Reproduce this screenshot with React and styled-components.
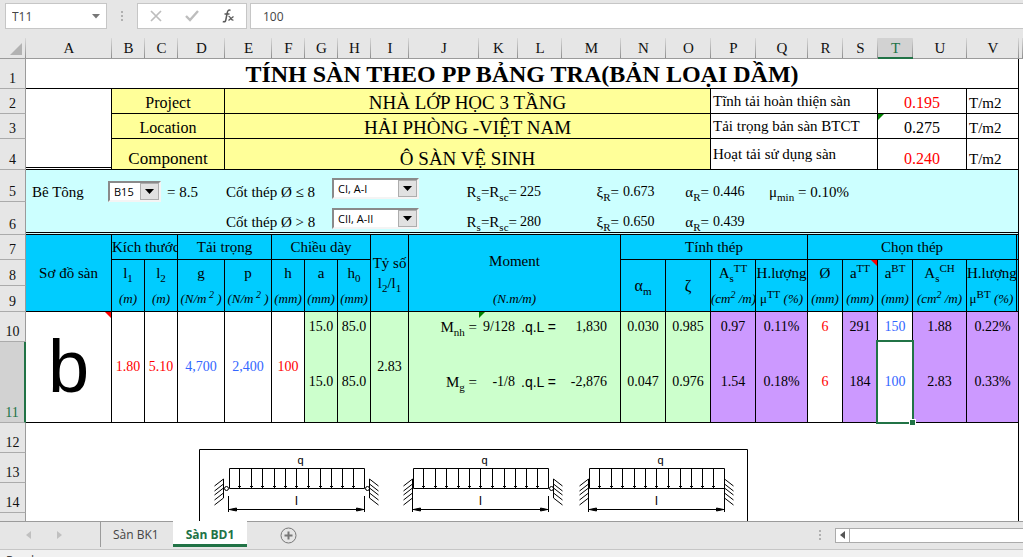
import React from "react";
import styled, { createGlobalStyle, css } from "styled-components";

const SERIF = '"Liberation Serif", "Times New Roman", serif';
const UI = '"Open Sans", "Noto Sans", sans-serif';

const color = {
  chrome: "#e6e6e6",
  line: "#9b9b9b",
  green: "#217346",
  yellow: "#ffff99",
  pale: "#ccffff",
  head: "#00ccff",
  mint: "#ccffcc",
  violet: "#cc99ff",
  white: "#ffffff",
  red: "#ff0000",
  blue: "#3366ff",
};

const GlobalStyle = createGlobalStyle`
  *, *::before, *::after { box-sizing: border-box; }
  body { margin: 0; background: #f1f1f1; }
  button, input, select { font: inherit; color: inherit; margin: 0; }
`;

const Page = styled.div`
  display: flex;
  flex-direction: column;
  height: 100vh;
  overflow: hidden;
  font-family: ${UI};
  font-size: 12px;
  color: #444;
`;

/* ---------- formula bar ---------- */

const FormulaBar = styled.header`
  display: flex;
  flex: none;
  align-items: center;
  height: 38px;
  padding: 3px 0 9px 5px;
  background: ${color.chrome};
`;

const NameBox = styled.div`
  display: flex;
  align-items: center;
  width: 102px;
  height: 26px;
  padding-right: 6px;
  border: 1px solid #c6c6c6;
  background: #fff;
`;

const BarInput = styled.input`
  flex: 1;
  min-width: 0;
  height: 24px;
  padding: 0 6px;
  border: 0;
  background: transparent;
  outline: 0;
`;

const Dots = styled.span`
  width: 2px;
  height: 10px;
  margin: 0 14px;
  background: repeating-linear-gradient(#b0b0b0 0 2px, transparent 2px 4px);
`;

const BarButtons = styled.div`
  display: flex;
  align-items: center;
  justify-content: space-around;
  width: 110px;
  height: 26px;
  margin-right: 3px;
  border: 1px solid #c6c6c6;
  background: #fff;
`;

const IconButton = styled.button`
  display: flex;
  align-items: center;
  justify-content: center;
  padding: 0;
  border: 0;
  background: transparent;
`;

const FormulaField = styled.div`
  display: flex;
  flex: 1;
  height: 26px;
  padding-left: 6px;
  border: 1px solid #c6c6c6;
  border-right: 0;
  background: #fff;
`;

/* ---------- sheet ---------- */

const SheetArea = styled.main`
  flex: none;
  overflow: hidden;
  background: #fff;
`;

const Sheet = styled.table`
  width: 100%;
  table-layout: fixed;
  border-collapse: separate;
  border-spacing: 0;
  font-family: ${SERIF};
  font-size: 15px;
  line-height: 20px;
  color: #000;
  white-space: nowrap;

  sub, sup { font-size: 11px; line-height: 0; }
`;

const Row = styled.tr`
  height: ${(p) => p.$h}px;
`;

const ColumnHead = styled.th`
  padding: 0;
  line-height: 18px;
  font-weight: 400;
  background: linear-gradient(#d8d8d8, #8f8f8f) right / 1px 100% no-repeat
    ${(p) => (p.$on ? "#d2d2d2" : color.chrome)};
  color: ${(p) => (p.$on ? color.green : "#111")};
  border-bottom: ${(p) => (p.$on ? `2px solid ${color.green}` : `1px solid ${color.line}`)};
`;

const Corner = styled(ColumnHead)`
  vertical-align: bottom;
  svg { display: block; margin: 0 0 3px 10px; }
`;

const RowHead = styled.th`
  padding: 0 0 1px;
  font-size: 14px;
  line-height: 16px;
  font-weight: 400;
  vertical-align: bottom;
  color: ${(p) => (p.$on ? color.green : "#111")};
  background: ${(p) => (p.$on ? "#d2d2d2" : color.chrome)};
  border-bottom: 1px solid #ababab;
  border-right: ${(p) => (p.$on ? `2px solid ${color.green}` : `1px solid ${color.line}`)};
`;

const LastRowHead = styled(RowHead)`
  padding: 0;
  border-bottom: 0;
`;

const edge = { none: "0", thin: "1px solid #000", double: "3px double #000" };

const Cell = styled.td`
  position: relative;
  padding: 0 ${(p) => p.$pr || 0}px 0 ${(p) => p.$pl || 0}px;
  text-align: ${(p) => p.$align || "center"};
  vertical-align: ${(p) => p.$v || "middle"};
  background: ${(p) => color[p.$bg || "white"]};
  color: ${(p) => (p.$ink ? color[p.$ink] : "#000")};
  border-right: ${(p) => edge[p.$right || "thin"]};
  border-bottom: ${(p) => edge[p.$bottom || "thin"]};
  ${(p) => p.$size && css`font-size: ${p.$size}px;`}
  ${(p) => p.$active && css`z-index: 1;`}
`;

const TitleCell = styled(Cell)`
  font-size: 24px;
  line-height: 28px;
  font-weight: 700;
`;

const HeadCell = styled(Cell).attrs({ $bg: "head" })``;

const UnitCell = styled(HeadCell)`
  font-size: 13px;
  font-style: italic;
  sup { font-size: 10px; }
`;

const NumCell = styled(Cell)`
  font-size: 14px;
`;

const SansCell = styled(NumCell)`
  font-family: "Liberation Sans", Arial, sans-serif;
`;

const DiagramLetter = styled(Cell)`
  font-family: "Liberation Sans", Arial, sans-serif;
  font-size: 74px;
  line-height: 80px;
`;

const Filler = styled.td`
  padding: 0;
`;

const Upright = styled.span`
  font-style: normal;
  sup { font-size: 11px; }
`;

const Flag = styled.span`
  position: absolute;
  top: 0;
  ${(p) => (p.$side === "left" ? "left: 0;" : "right: 0;")}
  width: 6px;
  height: 6px;
  background: ${(p) => (p.$side === "left" ? "#008000" : "#ff0000")};
  clip-path: ${(p) =>
    p.$side === "left" ? "polygon(0 0, 100% 0, 0 100%)" : "polygon(0 0, 100% 0, 100% 100%)"};
`;

const Selection = styled.span`
  position: absolute;
  inset: -2px;
  border: 2px solid ${color.green};

  &::after {
    content: "";
    position: absolute;
    right: -4px;
    bottom: -4px;
    width: 7px;
    height: 7px;
    border: 1px solid #fff;
    background: ${color.green};
  }
`;

/* ---------- material rows ---------- */

const Inline = styled.div`
  display: flex;
  align-items: flex-end;
  justify-content: ${(p) => (p.$spread ? "space-between" : "flex-start")};
`;

const FieldLabel = styled.label`
  width: ${(p) => p.$w}px;
`;

const Push = styled.span`
  margin-left: auto;
`;

const Value = styled.span`
  font-size: 14px;
`;

const Combo = styled.span`
  position: relative;
  display: flex;
  width: ${(p) => p.$w}px;
  height: 21px;
  margin: 0 6px ${(p) => (p.$raised ? 3 : 0)}px 0;
  border: 2px solid;
  border-color: #8a8a8a #f4f4f4 #f4f4f4 #8a8a8a;
  background: #fff;

  select {
    flex: 1;
    min-width: 0;
    padding: 0 0 0 4px;
    border: 0;
    outline: 0;
    appearance: none;
    background: transparent;
    font-family: ${UI};
    font-size: 11px;
    line-height: 16px;
    color: #000;
  }

  svg {
    flex: none;
    border: 1px solid #adadad;
    background: #e1e1e1;
    pointer-events: none;
  }
`;

/* ---------- drawing ---------- */

const DrawingCell = styled(Cell)`
  padding: 26px 0 0 173px;

  svg { display: block; }
`;

/* ---------- footer ---------- */

const TabBar = styled.nav`
  display: flex;
  flex: none;
  height: 29px;
  border-top: 1px solid ${color.line};
  border-bottom: 1px solid #c6c6c6;
  background: ${color.chrome};
`;

const TabArrows = styled.div`
  display: flex;
  align-items: center;
  justify-content: space-between;
  width: 62px;
  height: 26px;
  padding-left: 26px;
  margin-right: 38px;
`;

const Tab = styled.button`
  height: 26px;
  margin-top: -1px;
  border: 0;
  background: transparent;
  ${(p) =>
    p.$on
      ? css`
          background: #fff;
          color: ${color.green};
          font-weight: 700;
          border-bottom: 3px solid ${color.green};
          padding: 3px 13px 0;
        `
      : css`
          padding: 0 14px 0 12px;
          border-left: 1px solid #9b9b9b;
        `}
`;

const AddSheet = styled(IconButton)`
  width: 18px;
  height: 26px;
  margin-left: 32px;
`;

const ScrollGroup = styled.div`
  display: flex;
  align-items: center;
  width: 218px;
  height: 26px;
  margin-left: auto;
`;

const ScrollButton = styled(IconButton)`
  width: 15px;
  height: 15px;
  border: 1px solid #ababab;
  background: #fff;
`;

const ScrollTrack = styled.div`
  flex: 1;
  height: 15px;
  border: 1px solid #ababab;
  border-width: 1px 0;
  background: #fff;
`;

const StatusBar = styled.footer`
  flex: 1;
  padding: 2px 6px;
  background: #f1f1f1;
`;

/* ---------- data ---------- */

const columns = [
  ["A", 86], ["B", 33], ["C", 33], ["D", 47], ["E", 47], ["F", 33], ["G", 33], ["H", 33],
  ["I", 38], ["J", 70], ["K", 39], ["L", 44], ["M", 59], ["N", 45], ["O", 45], ["P", 45],
  ["Q", 52], ["R", 35], ["S", 35], ["T", 35], ["U", 54], ["V", 52],
];

const project = [
  { n: 2, h: 25, label: "Project", value: "NHÀ LỚP HỌC 3 TẦNG", load: "Tĩnh tải hoàn thiện sàn", amount: "0.195", ink: "red", size: 16 },
  { n: 3, h: 25, label: "Location", value: "HẢI PHÒNG -VIỆT NAM", load: "Tải trọng bản sàn BTCT", amount: "0.275", flag: true, size: 16 },
  { n: 4, h: 31, label: "Component", value: "Ô SÀN VỆ SINH", load: "Hoạt tải sử dụng sàn", amount: "0.240", ink: "red", size: 17 },
];

const results = [
  {
    n: 10, h: 30, sub: "nh", ratio: "9/128", m: "1,830", alpha: "0.030", zeta: "0.985", as: "0.97",
    mu: "0.11%", dia: "6", att: "291", abt: "150", ach: "1.88", mubt: "0.22%",
  },
  {
    n: 11, h: 81, sub: "g", ratio: "-1/8", m: "-2,876", alpha: "0.047", zeta: "0.976", as: "1.54",
    mu: "0.18%", dia: "6", att: "184", abt: "100", ach: "2.83", mubt: "0.33%",
  },
];

const beams = [
  { x: 30, left: "pin", right: "pin" },
  { x: 214, left: "fixed", right: "pin" },
  { x: 390, left: "fixed", right: "fixed" },
];

const arrowOffsets = [10, 22, 33, 45, 56, 67, 79, 91, 102, 113, 124];

/* ---------- parts ---------- */

function ComboBox({ id, width, raised, options }) {
  return (
    <Combo $w={width} $raised={raised}>
      <select id={id} defaultValue={options[0]}>
        {options.map((o) => (
          <option key={o}>{o}</option>
        ))}
      </select>
      <svg width="19" height="17" viewBox="0 0 17 15" aria-hidden="true">
        <path d="M4 5h9L8.500 10z" fill="#000" />
      </svg>
    </Combo>
  );
}

function Wall({ x, dir }) {
  const hatch = [0, 5, 9, 14, 19].map((y) => `M${x} ${30 + y}l${dir * 9} 7`).join("");
  return <path d={`M${x} 30v19${hatch}`} />;
}

function Beam({ x, left, right }) {
  const L = x + 0.5;
  const R = L + 135;
  return (
    <g fill="none" stroke="#000" strokeWidth="1">
      <path d={`M${L} 39.500V19.500H${R}V39.500Z`} />
      {arrowOffsets.map((o) => (
        <path key={o} d={`M${L + o} 20V39M${L + o - 1.5} 37.500h3`} />
      ))}
      {left === "pin" && <circle cx={L - 3} cy="39.500" r="2" />}
      {right === "pin" && <circle cx={R + 3} cy="39.500" r="2" />}
      <Wall x={left === "pin" ? L - 6 : L - 1} dir={-1} />
      <Wall x={right === "pin" ? R + 5 : R} dir={1} />
      <path d={`M${L - 1} 47V63M${R} 47V63M${L - 1} 60.500H${R}`} />
      <path d={`M${L} 60.500l7-1.500v3zM${R - 1} 60.500l-7-1.500v3z`} fill="#000" />
      <g fill="#000" stroke="none" fontFamily="Liberation Sans, Arial, sans-serif">
        <text x={L + 71} y="15" fontSize="11" textAnchor="middle">q</text>
        <text x={L + 67} y="56" fontSize="13" textAnchor="middle">l</text>
      </g>
    </g>
  );
}

function SlabSchemes() {
  return (
    <svg width="549" height="72" viewBox="0 0 549 72" role="img" aria-label="Sơ đồ sàn">
      <path d="M.5 72V.5H548.500V72" fill="none" stroke="#000" />
      {beams.map((b) => (
        <Beam key={b.x} {...b} />
      ))}
    </svg>
  );
}

function MaterialRow({ n, h, bottom, first, sign, steel, rs, xi, alpha, mu }) {
  const base = { $bg: "pale", $v: "bottom", $right: "none", $bottom: bottom, $align: "left" };
  return (
    <Row $h={h}>
      <RowHead>{n}</RowHead>
      <Cell {...base} colSpan={4} $pl={6}>
        {first && (
          <Inline>
            <FieldLabel $w={76} htmlFor="concrete">Bê Tông</FieldLabel>
            <ComboBox id="concrete" width={53} options={["B15", "B20", "B25"]} />
            <span>= 8.5</span>
          </Inline>
        )}
      </Cell>
      <Cell {...base} colSpan={7} $pl={1} $pr={1}>
        <Inline>
          <FieldLabel $w={106} htmlFor={`steel-${n}`}>Cốt thép Ø {sign} 8</FieldLabel>
          <ComboBox id={`steel-${n}`} width={87} raised options={steel} />
          <Push>R<sub>s</sub>=R<sub>sc</sub>=</Push>
        </Inline>
      </Cell>
      <Cell {...base} colSpan={2} $pl={2} $pr={2}>
        <Inline $spread>
          <Value>{rs}</Value>
          <span>ξ<sub>R</sub>=</span>
        </Inline>
      </Cell>
      <Cell {...base} colSpan={2} $pl={2} $pr={2}>
        <Inline $spread>
          <Value>{xi}</Value>
          <span>α<sub>R</sub>=</span>
        </Inline>
      </Cell>
      <Cell {...base} $pl={2}><Value>{alpha}</Value></Cell>
      <Cell {...base} colSpan={6} $pl={13} $right="thin">{mu}</Cell>
      <Filler />
    </Row>
  );
}

const N2 = <>(N/m<sup> 2</sup> )</>;
const CM2 = <>(cm<sup>2</sup> /m)</>;

export default function App() {
  return (
    <Page>
      <GlobalStyle />
      <FormulaBar>
        <NameBox>
          <BarInput aria-label="Name box" defaultValue="T11" />
          <svg width="8" height="5" viewBox="0 0 8 5"><path d="M0 0h8L4 4.500z" fill="#777" /></svg>
        </NameBox>
        <Dots />
        <BarButtons>
          <IconButton aria-label="Cancel">
            <svg width="12" height="12" viewBox="0 0 12 12"><path d="M1 1l10 10M11 1L1 11" stroke="#bdbdbd" strokeWidth="1.700" /></svg>
          </IconButton>
          <IconButton aria-label="Enter">
            <svg width="14" height="12" viewBox="0 0 14 12"><path d="M1 6l4 4 8-9" fill="none" stroke="#bdbdbd" strokeWidth="2.400" /></svg>
          </IconButton>
          <IconButton aria-label="Insert function">
            <svg width="13" height="14" viewBox="0 0 13 14" fill="none" stroke="#5a5a5a">
              <path d="M8.500 1.500C6.500 .3 5.600 2 5.200 4L3.800 11c-.4 1.800-1.400 2.300-3 1.500M2.500 5h5" strokeWidth="1.500" />
              <path d="M6.500 7.500c2-.8 2.200 4.500 5 3.500M11.500 7.500L6.500 11.500" strokeWidth="1.300" />
            </svg>
          </IconButton>
        </BarButtons>
        <FormulaField>
          <BarInput aria-label="Formula" defaultValue="100" />
        </FormulaField>
      </FormulaBar>

      <SheetArea>
        <Sheet>
          <colgroup>
            <col style={{ width: 26 }} />
            {columns.map(([name, width]) => (
              <col key={name} style={{ width }} />
            ))}
            <col />
          </colgroup>
          <thead>
            <Row $h={21}>
              <Corner>
                <svg width="12" height="12" viewBox="0 0 12 12"><path d="M12 0v12H0z" fill="#b2b2b2" /></svg>
              </Corner>
              {columns.map(([name]) => (
                <ColumnHead key={name} $on={name === "T"}>{name}</ColumnHead>
              ))}
              <ColumnHead />
            </Row>
          </thead>
          <tbody>
            <Row $h={30}>
              <RowHead>1</RowHead>
              <TitleCell colSpan={22}>TÍNH SÀN THEO PP BẢNG TRA(BẢN LOẠI DẦM)</TitleCell>
              <Filler />
            </Row>

            {project.map((p, i) => (
              <Row key={p.n} $h={p.h}>
                <RowHead>{p.n}</RowHead>
                {i === 0 && <Cell rowSpan={3} $bottom="double" />}
                <Cell colSpan={3} $bg="yellow" $v="bottom" $size={p.size}>{p.label}</Cell>
                <Cell colSpan={11} $bg="yellow" $v="bottom" $size={19}>{p.value}</Cell>
                <Cell colSpan={4} $align="left" $pl={2}>{p.load}</Cell>
                <Cell colSpan={2} $v="bottom" $size={16} $ink={p.ink}>
                  {p.flag && <Flag $side="left" />}
                  {p.amount}
                </Cell>
                <Cell $align="left" $v="bottom" $pl={2}>T/m2</Cell>
                <Filler />
              </Row>
            ))}

            <MaterialRow
              n={5} h={32} first bottom="none" sign="≤" steel={["CI, A-I", "CII, A-II"]}
              rs="225" xi="0.673" alpha="0.446" mu={<>μ<sub>min</sub> = 0.10%</>}
            />
            <MaterialRow
              n={6} h={33} bottom="double" sign=">" steel={["CII, A-II", "CI, A-I"]}
              rs="280" xi="0.650" alpha="0.439"
            />

            <Row $h={25}>
              <RowHead>7</RowHead>
              <HeadCell rowSpan={3}>Sơ đồ sàn</HeadCell>
              <HeadCell colSpan={2}>Kích thước</HeadCell>
              <HeadCell colSpan={2}>Tải trọng</HeadCell>
              <HeadCell colSpan={3}>Chiều dày</HeadCell>
              <HeadCell rowSpan={3}>Tỷ số<br />l<sub>2</sub>/l<sub>1</sub></HeadCell>
              <HeadCell colSpan={4} rowSpan={2} $bottom="none">Moment</HeadCell>
              <HeadCell colSpan={4}>Tính thép</HeadCell>
              <HeadCell colSpan={5} $right="double">Chọn thép</HeadCell>
              <Filler />
            </Row>
            <Row $h={26}>
              <RowHead>8</RowHead>
              <HeadCell $bottom="none">l<sub>1</sub></HeadCell>
              <HeadCell $bottom="none">l<sub>2</sub></HeadCell>
              <HeadCell $bottom="none">g</HeadCell>
              <HeadCell $bottom="none">p</HeadCell>
              <HeadCell $bottom="none">h</HeadCell>
              <HeadCell $bottom="none">a</HeadCell>
              <HeadCell $bottom="none">h<sub>0</sub></HeadCell>
              <HeadCell rowSpan={2} $size={16}>α<sub>m</sub></HeadCell>
              <HeadCell rowSpan={2} $size={16}>ζ</HeadCell>
              <HeadCell $bottom="none">A<sub>s</sub><sup>TT</sup></HeadCell>
              <HeadCell $bottom="none">H.lượng</HeadCell>
              <HeadCell $bottom="none">Ø</HeadCell>
              <HeadCell $bottom="none"><Flag $side="right" />a<sup>TT</sup></HeadCell>
              <HeadCell $bottom="none">a<sup>BT</sup></HeadCell>
              <HeadCell $bottom="none">A<sub>s</sub><sup>CH</sup></HeadCell>
              <HeadCell $bottom="none" $right="double">H.lượng</HeadCell>
              <Filler />
            </Row>
            <Row $h={26}>
              <RowHead>9</RowHead>
              <UnitCell>(m)</UnitCell>
              <UnitCell>(m)</UnitCell>
              <UnitCell>{N2}</UnitCell>
              <UnitCell>{N2}</UnitCell>
              <UnitCell>(mm)</UnitCell>
              <UnitCell>(mm)</UnitCell>
              <UnitCell>(mm)</UnitCell>
              <UnitCell colSpan={4}>(N.m/m)</UnitCell>
              <UnitCell>{CM2}</UnitCell>
              <UnitCell><Upright>μ<sup>TT</sup></Upright> (%)</UnitCell>
              <UnitCell>(mm)</UnitCell>
              <UnitCell>(mm)</UnitCell>
              <UnitCell>(mm)</UnitCell>
              <UnitCell>{CM2}</UnitCell>
              <UnitCell $right="double"><Upright>μ<sup>BT</sup></Upright> (%)</UnitCell>
              <Filler />
            </Row>

            {results.map((r, i) => {
              const first = i === 0;
              const bottom = first ? "none" : "thin";
              const mint = { $bg: "mint", $bottom: bottom };
              const violet = { $bg: "violet", $bottom: bottom };
              return (
                <Row key={r.n} $h={r.h}>
                  <RowHead $on={!first}>{r.n}</RowHead>
                  {first && (
                    <>
                      <DiagramLetter rowSpan={2}><Flag $side="right" />b</DiagramLetter>
                      <NumCell rowSpan={2} $ink="red">1.80</NumCell>
                      <NumCell rowSpan={2} $ink="red">5.10</NumCell>
                      <NumCell rowSpan={2} $ink="blue">4,700</NumCell>
                      <NumCell rowSpan={2} $ink="blue">2,400</NumCell>
                      <NumCell rowSpan={2} $ink="red">100</NumCell>
                    </>
                  )}
                  <NumCell {...mint}>15.0</NumCell>
                  <NumCell {...mint}>85.0</NumCell>
                  {first && <NumCell rowSpan={2} $bg="mint">2.83</NumCell>}
                  <Cell {...mint} $right="none" $align="right" $pr={2}>M<sub>{r.sub}</sub> =</Cell>
                  <NumCell {...mint} $right="none" $align="right" $pr={3}>
                    {first && <Flag $side="left" />}
                    {r.ratio}
                  </NumCell>
                  <SansCell {...mint} $right="none" $pr={3}>.q.L =</SansCell>
                  <NumCell {...mint} $align="right" $pr={13}>{r.m}</NumCell>
                  <NumCell {...mint}>{r.alpha}</NumCell>
                  <NumCell {...mint}>{r.zeta}</NumCell>
                  <NumCell {...violet}>{r.as}</NumCell>
                  <NumCell {...violet}>{r.mu}</NumCell>
                  <NumCell $bottom={bottom} $ink="red">{r.dia}</NumCell>
                  <NumCell {...violet}>{r.att}</NumCell>
                  <NumCell $bottom={bottom} $ink="blue" $active={!first}>
                    {r.abt}
                    {!first && <Selection />}
                  </NumCell>
                  <NumCell {...violet}>{r.ach}</NumCell>
                  <NumCell {...violet}>{r.mubt}</NumCell>
                  <Filler />
                </Row>
              );
            })}

            <Row $h={30}>
              <RowHead>12</RowHead>
              <DrawingCell colSpan={22} rowSpan={4} $v="top" $bottom="none">
                <SlabSchemes />
              </DrawingCell>
              <Filler />
            </Row>
            <Row $h={30}>
              <RowHead>13</RowHead>
              <Filler />
            </Row>
            <Row $h={30}>
              <RowHead>14</RowHead>
              <Filler />
            </Row>
            <Row $h={8}>
              <LastRowHead />
              <Filler />
            </Row>
          </tbody>
        </Sheet>
      </SheetArea>

      <TabBar>
        <TabArrows>
          <IconButton aria-label="Previous sheet">
            <svg width="5" height="8" viewBox="0 0 5 8"><path d="M5 0v8L0 4z" fill="#c0c0c0" /></svg>
          </IconButton>
          <IconButton aria-label="Next sheet">
            <svg width="5" height="8" viewBox="0 0 5 8"><path d="M0 0v8l5-4z" fill="#c0c0c0" /></svg>
          </IconButton>
        </TabArrows>
        <Tab>Sàn BK1</Tab>
        <Tab $on>Sàn BD1</Tab>
        <AddSheet aria-label="New sheet">
          <svg width="17" height="17" viewBox="0 0 17 17" fill="none" stroke="#777">
            <circle cx="8.500" cy="8.500" r="7.500" />
            <path d="M8.500 4.500v8M4.500 8.500h8" strokeWidth="2" />
          </svg>
        </AddSheet>
        <ScrollGroup>
          <Dots />
          <ScrollButton aria-label="Scroll left">
            <svg width="5" height="8" viewBox="0 0 5 8"><path d="M5 0v8L0 4z" fill="#555" /></svg>
          </ScrollButton>
          <ScrollTrack />
        </ScrollGroup>
      </TabBar>
      <StatusBar>Ready</StatusBar>
    </Page>
  );
}
